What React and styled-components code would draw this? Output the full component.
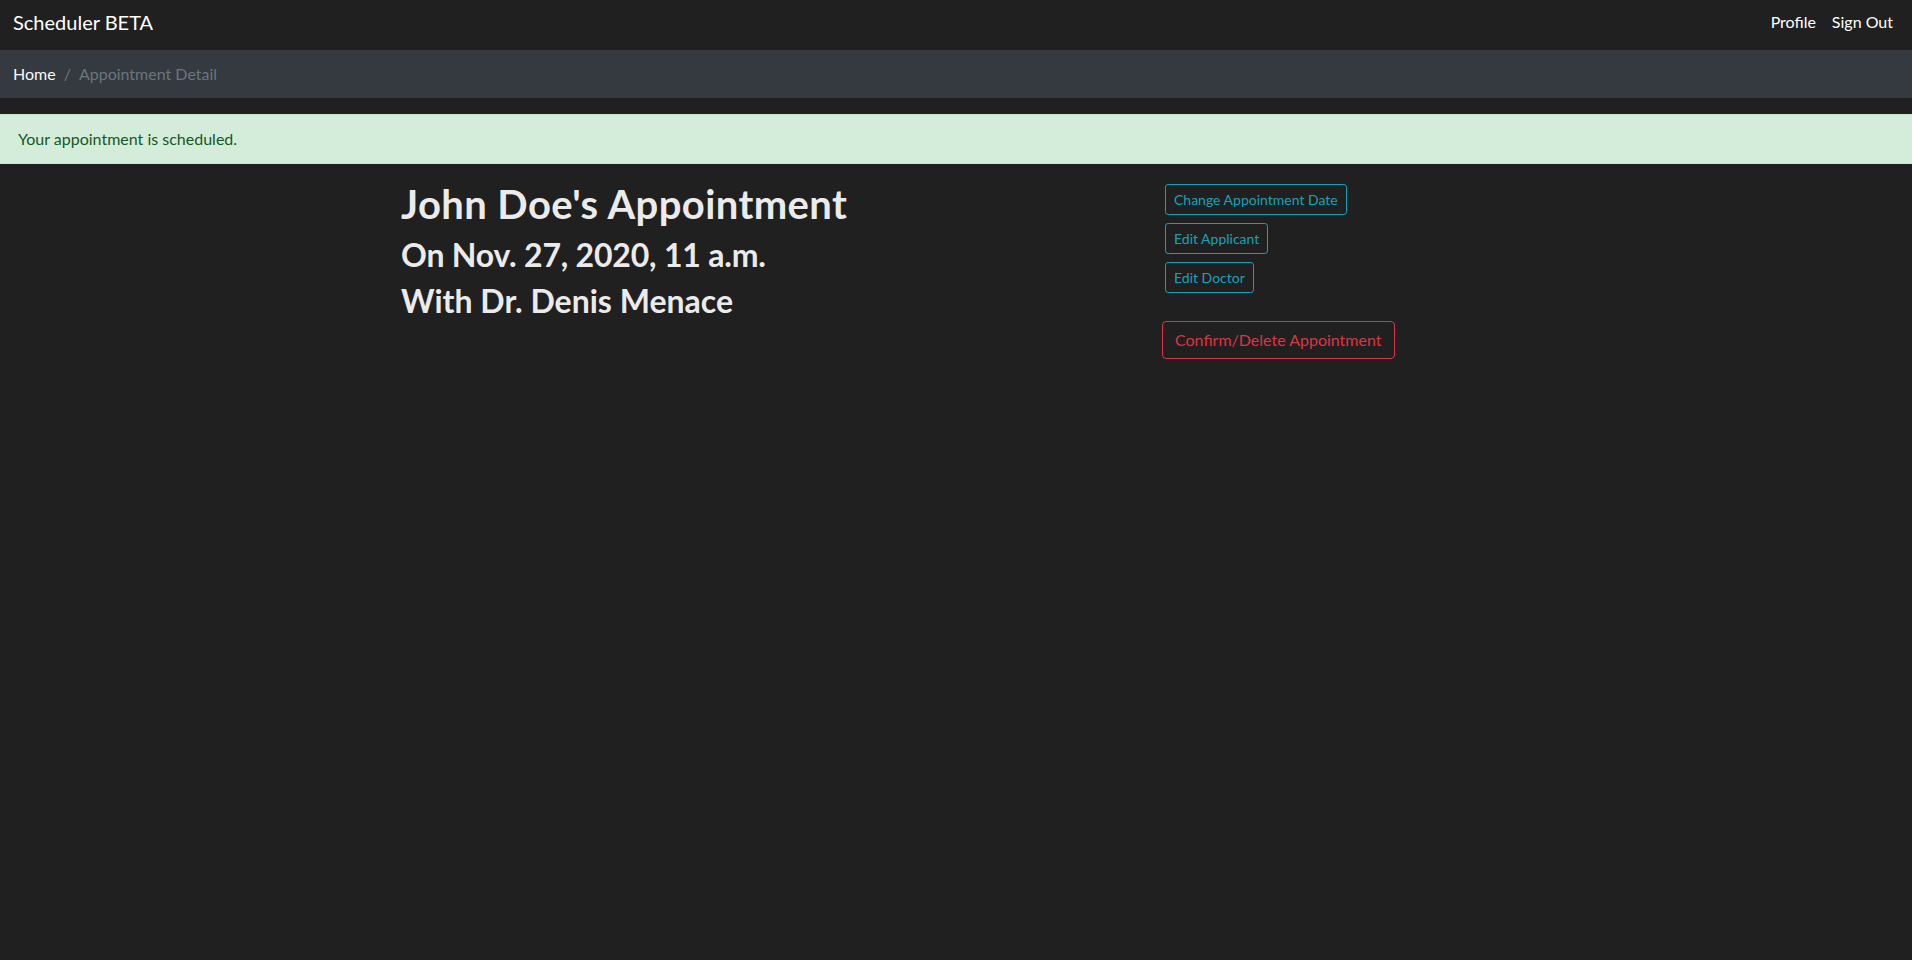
import React from "react";
import styled, { createGlobalStyle } from "styled-components";

const Global = createGlobalStyle`
  html, body { margin: 0; padding: 0; }
  body {
    background: #202020;
    font-family: Lato, "Noto Sans", "Liberation Sans", sans-serif;
    font-size: 16px;
    line-height: 1.5;
    color: #e9ecef;
  }
  * { box-sizing: border-box; }
`;

const Navbar = styled.nav`
  display: flex;
  align-items: center;
  justify-content: space-between;
  height: 50px;
  padding: 0 11px 6px 13px;
  background: #202020;
`;

const Brand = styled.a`
  font-size: 20px;
  color: #fff;
  text-decoration: none;
`;

const NavLinks = styled.div`
  display: flex;
`;

const NavLink = styled.a`
  color: #fff;
  padding: 0 8px;
  text-decoration: none;
`;

const Breadcrumb = styled.ol`
  display: flex;
  list-style: none;
  margin: 0 0 16px;
  padding: 12px 13px;
  background: #343a40;
`;

const Crumb = styled.li`
  color: ${(p) => (p.$active ? "#6c757d" : "#f8f9fa")};
`;

const Separator = styled.li`
  color: #6c757d;
  padding: 0 8px;
`;

const Alert = styled.div`
  background: #d4edda;
  color: #155724;
  border-top: 1px solid #c3e6cb;
  border-bottom: 1px solid #c3e6cb;
  padding: 12px 18px;
  margin-bottom: 16px;
`;

const Container = styled.main`
  width: 1140px;
  margin: 0 auto;
  padding: 0 15px;
`;

const Row = styled.div`
  display: grid;
  grid-template-columns: 760px 380px;
  margin: 0 -15px;
`;

const Col = styled.div`
  padding: 0 15px;
  display: flex;
  flex-direction: column;
  align-items: flex-start;
`;

const Title = styled.h1`
  font-size: ${(p) => p.$size}px;
  letter-spacing: ${(p) => p.$spacing || 0}px;
  font-weight: 700;
  line-height: 1.2;
  margin: 0 0 8px;
  color: #ebebeb;
`;

const Button = styled.button`
  font-family: inherit;
  background: transparent;
  cursor: pointer;
  line-height: 1.5;
  color: ${(p) => p.$color};
  border: 1px solid ${(p) => p.$color};
  font-size: ${(p) => (p.$small ? 14 : 16)}px;
  padding: ${(p) => (p.$small ? "4px 8px" : "6px 12px")};
  border-radius: ${(p) => (p.$small ? "3.2px" : "4px")};
  margin: ${(p) => (p.$small ? "4px 0 4px 4px" : "24px 0 0 1px")};
`;

export default function App() {
  return (
    <>
      <Global />
      <Navbar>
        <Brand href="#">Scheduler BETA</Brand>
        <NavLinks>
          <NavLink href="#">Profile</NavLink>
          <NavLink href="#">Sign Out</NavLink>
        </NavLinks>
      </Navbar>
      <Breadcrumb>
        <Crumb>Home</Crumb>
        <Separator aria-hidden="true">/</Separator>
        <Crumb $active>Appointment Detail</Crumb>
      </Breadcrumb>
      <Alert>Your appointment is scheduled.</Alert>
      <Container>
        <Row>
          <Col>
            <Title $size={40} $spacing={0.4}>John Doe's Appointment</Title>
            <Title as="h2" $size={32} $spacing={-0.2}>On Nov. 27, 2020, 11 a.m.</Title>
            <Title as="h2" $size={32}>With Dr. Denis Menace</Title>
          </Col>
          <Col>
            <Button $small $color="#17a2b8">Change Appointment Date</Button>
            <Button $small $color="#17a2b8">Edit Applicant</Button>
            <Button $small $color="#17a2b8">Edit Doctor</Button>
            <Button $color="#dc3545">Confirm/Delete Appointment</Button>
          </Col>
        </Row>
      </Container>
    </>
  );
}
